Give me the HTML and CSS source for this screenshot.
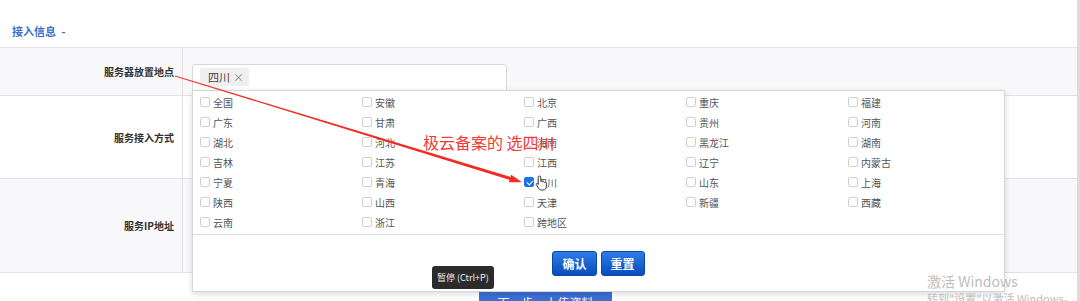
FILE: index.html
```html
<html>
    <head>
        <link rel="stylesheet" href="styles.css">
    </head>
    <body>
        <div class="page">
            <div class="main">
                <h3 class="section-title">接入信息 <span class="toggle">-</span></h3>

                <div class="form-table">
                    <div class="form-row row-place">
                        <div class="form-label">服务器放置地点</div>
                        <div class="form-field">
                            <div class="tag-input">
                                <span class="tag">四川 <i class="tag-close">×</i></span>
                            </div>
                        </div>
                    </div>
                    <div class="form-row row-mode">
                        <div class="form-label">服务接入方式</div>
                        <div class="form-field"></div>
                    </div>
                    <div class="form-row row-ip">
                        <div class="form-label">服务IP地址</div>
                        <div class="form-field"></div>
                    </div>
                </div>

                <div class="actions">
                    <button class="next-btn">下一步，上传资料</button>
                </div>

                <!-- region picker dropdown -->
                <div class="region-menu">
                    <div class="region-grid">
                        <label class="region"><span class="box"></span>全国</label>
                        <label class="region"><span class="box"></span>安徽</label>
                        <label class="region"><span class="box"></span>北京</label>
                        <label class="region"><span class="box"></span>重庆</label>
                        <label class="region"><span class="box"></span>福建</label>

                        <label class="region"><span class="box"></span>广东</label>
                        <label class="region"><span class="box"></span>甘肃</label>
                        <label class="region"><span class="box"></span>广西</label>
                        <label class="region"><span class="box"></span>贵州</label>
                        <label class="region"><span class="box"></span>河南</label>

                        <label class="region"><span class="box"></span>湖北</label>
                        <label class="region"><span class="box"></span>河北</label>
                        <label class="region"><span class="box"></span>海南</label>
                        <label class="region"><span class="box"></span>黑龙江</label>
                        <label class="region"><span class="box"></span>湖南</label>

                        <label class="region"><span class="box"></span>吉林</label>
                        <label class="region"><span class="box"></span>江苏</label>
                        <label class="region"><span class="box"></span>江西</label>
                        <label class="region"><span class="box"></span>辽宁</label>
                        <label class="region"><span class="box"></span>内蒙古</label>

                        <label class="region"><span class="box"></span>宁夏</label>
                        <label class="region"><span class="box"></span>青海</label>
                        <label class="region"><span class="box checked"></span>四川</label>
                        <label class="region"><span class="box"></span>山东</label>
                        <label class="region"><span class="box"></span>上海</label>

                        <label class="region"><span class="box"></span>陕西</label>
                        <label class="region"><span class="box"></span>山西</label>
                        <label class="region"><span class="box"></span>天津</label>
                        <label class="region"><span class="box"></span>新疆</label>
                        <label class="region"><span class="box"></span>西藏</label>

                        <label class="region"><span class="box"></span>云南</label>
                        <label class="region"><span class="box"></span>浙江</label>
                        <label class="region"><span class="box"></span>跨地区</label>
                    </div>
                    <div class="menu-footer">
                        <button class="blue-btn">确认</button>
                        <button class="blue-btn">重置</button>
                    </div>
                </div>
            </div>
            <div class="scrollbar"></div>
        </div>

        <!-- screenshot annotation -->
        <svg class="annotation" width="1080" height="301">
            <polygon points="175,75.6 512.4,177.6 511.6,180.4 175,76.4" fill="#f22c22"/>
            <polygon points="522,182.2 508.8,182.3 511.2,174.7" fill="#f22c22"/>
        </svg>
        <div class="note">极云备案的 选四川</div>

        <svg class="cursor" width="14" height="16" viewBox="0 0 14 16">
            <path d="M4.5 1 C5.3 1 5.8 1.5 5.8 2.3 V6.5 C6.2 6.1 7.4 6.1 7.7 6.9 C8.1 6.5 9.3 6.5 9.6 7.4 C10 7.1 11.2 7.2 11.3 8.2 V11.5 C11.3 13.5 10 15 8 15 H6.5 C5 15 4.2 14.2 3.4 13 L1.3 9.6 C0.9 8.9 1.8 8.1 2.5 8.6 L3.2 9.4 V2.3 C3.2 1.5 3.7 1 4.5 1 Z" fill="white" stroke="#222" stroke-width="0.9"/>
        </svg>

        <div class="tooltip">暂停 (Ctrl+P)</div>

        <div class="watermark">
            <div class="wm-title">激活 Windows</div>
            <div class="wm-sub">转到"设置"以激活 Windows。</div>
        </div>
    </body>
</html>
```

FILE: styles.css
```css
body {
    margin: 0;
    background-color: white;
    font-family: "Noto Sans CJK SC", "Noto Sans", sans-serif;
    color: #333;
    overflow: hidden;
}

.page {
    display: flex;
    height: 301px;
}

.main {
    position: relative;
    flex: 1;
}

.scrollbar {
    width: 3px;
    background-color: #dcdcdc;
}

.section-title {
    margin: 0;
    height: 47px;
    box-sizing: border-box;
    padding: 24px 0 0 12px;

    font-size: 11px;
    line-height: 14px;
    font-weight: bold;
    color: #3c6fc6;
}

.toggle {
    margin-left: 3px;
}

.form-table {
    border-top: 1px solid #e2e2e2;
}

.form-row {
    display: flex;
    border-bottom: 1px solid #e2e2e2;
}

.row-place {
    height: 47px;
    background-color: #f8f8fa;
}

.row-mode {
    height: 82px;
}

.row-ip {
    height: 93px;
    background-color: #f8f8fa;
}

.form-label {
    width: 183px;
    box-sizing: border-box;
    padding-right: 8px;
    border-right: 1px solid #e2e2e2;

    display: flex;
    align-items: center;
    justify-content: flex-end;

    font-size: 10px;
    font-weight: bold;
    color: #333;
}

.form-field {
    flex: 1;
    padding: 16px 0 0 9px;
}

.tag-input {
    width: 315px;
    height: 30px;
    box-sizing: border-box;
    padding: 3px 0 0 7px;

    background-color: white;
    border: 1px solid #d9d9d9;
    border-radius: 3px;
}

.tag {
    display: inline-flex;
    align-items: center;
    height: 18px;
    padding: 0 5px 0 8px;

    background-color: #efefef;
    border-radius: 2px;

    font-size: 11px;
    color: #444;
}

.tag-close {
    font-style: normal;
    margin-left: 3px;
    color: #888;
}

.actions {
    padding: 18px 0 0 479px;
}

.next-btn {
    width: 133px;
    height: 22px;

    border: none;
    background-color: #3d6fd4;
    color: white;
    font-family: inherit;
    font-size: 12px;
}

/* dropdown over the form */
.region-menu {
    position: absolute;
    left: 192px;
    top: 90px;
    width: 813px;
    height: 202px;
    box-sizing: border-box;

    background-color: white;
    border: 1px solid #d6d6d6;
    box-shadow: 0 2px 6px rgba(0,0,0,0.15);
}

.region-grid {
    display: grid;
    grid-template-columns: repeat(5, 162px);
    grid-auto-rows: 20px;
    padding: 1px 0 2px 7px;
    border-bottom: 1px solid #dcdcdc;
}

.region {
    display: flex;
    align-items: center;
    gap: 3px;

    font-size: 10px;
    color: #555;
}

.box {
    width: 10px;
    height: 10px;
    box-sizing: border-box;
    border: 1px solid #cfcfcf;
    border-radius: 2px;
    background-color: white;
}

.box.checked {
    position: relative;
    background-color: #1a73e8;
    border-color: #1a73e8;
}

.box.checked::after {
    content: "";
    position: absolute;
    left: 2.5px;
    top: 0.5px;
    width: 3px;
    height: 5px;
    border: solid white;
    border-width: 0 1.5px 1.5px 0;
    transform: rotate(45deg);
}

.menu-footer {
    display: flex;
    justify-content: center;
    gap: 4px;
    padding-top: 16px;
}

.blue-btn {
    height: 25px;
    padding: 0 9px;

    border: 1px solid #0b47a8;
    border-radius: 3px;
    background: linear-gradient(#2c7de8, #0a4cbd);

    color: white;
    font-family: inherit;
    font-size: 12px;
    font-weight: bold;
}

.annotation {
    position: absolute;
    left: 0;
    top: 0;
    pointer-events: none;
}

.note {
    position: absolute;
    left: 423px;
    top: 132px;

    font-size: 16px;
    line-height: 20px;
    color: #f23b35;
}

.cursor {
    position: absolute;
    left: 535px;
    top: 175px;
}

.tooltip {
    position: absolute;
    left: 432px;
    top: 266px;
    height: 23px;
    padding: 0 5px;

    background-color: #2b2b2b;
    border-radius: 3px;

    font-size: 9px;
    line-height: 23px;
    color: #eee;
}

.watermark {
    position: absolute;
    left: 927px;
    top: 271px;
    color: #bdbdbd;
}

.wm-title {
    font-size: 14px;
    line-height: 20px;
}

.wm-sub {
    font-size: 11px;
    line-height: 14px;
}
```
